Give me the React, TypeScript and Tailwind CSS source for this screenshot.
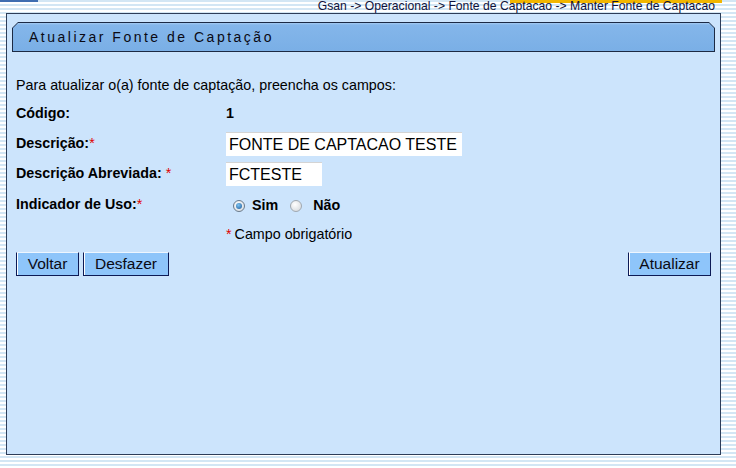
export default function App() {
  return (
    <div className="relative h-[468px] w-[736px] overflow-hidden bg-[repeating-linear-gradient(to_bottom,#d3e6f4_0px,#d3e6f4_2px,#ffffff_2px,#ffffff_4px)] font-['Liberation_Sans',Arial,sans-serif] text-black">
      <div className="absolute left-0 top-0 h-[2px] w-[38px] bg-[#3f6db0]" />
      <div className="absolute left-[510px] top-0 h-[3px] w-[212px] bg-[#f2b600]" />
      <div className="relative flex h-[13px] justify-end pr-[21px] text-[12.2px] leading-[12px] text-[#10123a] whitespace-nowrap">
        Gsan -&gt; Operacional -&gt; Fonte de Captacao -&gt; Manter Fonte de Captacao
      </div>
      <div className="ml-[6px] flex h-[442px] w-[715px] flex-col border border-[#2d3d58] bg-[#cce4fc]">
        <div className="mx-[5px] mt-[8px] h-[30px] bg-[#1c2a44] p-[1px] [clip-path:polygon(6px_0,calc(100%_-_6px)_0,100%_6px,100%_100%,0_100%,0_6px)]">
          <div className="flex h-full items-center bg-[linear-gradient(to_bottom,#a6ccf2_0px,#84b6ea_2px,#7aafe6_100%)] pl-[16px] text-[14px] tracking-[2.5px] text-[#0a0a14] [clip-path:polygon(5px_0,calc(100%_-_5px)_0,100%_5px,100%_100%,0_100%,0_5px)]">
            Atualizar Fonte de Captação
          </div>
        </div>

        <div className="ml-[9px] mt-[25px] text-[14.3px] leading-[17px]">
          Para atualizar o(a) fonte de captação, preencha os campos:
        </div>

        <div className="ml-[9px] mt-[8px] grid grid-cols-[210px_1fr] gap-y-[7px] text-[14.3px]">
          <div className="flex h-[24px] items-center font-bold">Código:</div>
          <div className="flex h-[24px] items-center font-bold">1</div>

          <div className="-mt-[1px] flex h-[24px] items-center font-bold">
            Descrição:<span className="font-normal text-[#e00000]">*</span>
          </div>
          <div className="-mt-[1px] flex h-[24px] items-center">
            <div className="flex h-[24px] w-[236px] items-center border-t border-t-[#d4d4d4] bg-white pl-[3px] text-[16px] leading-[18px]">
              FONTE DE CAPTACAO TESTE
            </div>
          </div>

          <div className="-mt-[1px] flex h-[24px] items-center font-bold">
            Descrição Abreviada:&nbsp;<span className="font-normal text-[#e00000]">*</span>
          </div>
          <div className="-mt-[1px] flex h-[24px] items-center">
            <div className="flex h-[24px] w-[96px] items-center border-t border-t-[#d4d4d4] bg-white pl-[3px] text-[16px] leading-[18px]">
              FCTESTE
            </div>
          </div>

          <div className="flex h-[24px] items-center font-bold">
            Indicador de Uso:<span className="font-normal text-[#e00000]">*</span>
          </div>
          <div className="flex h-[24px] items-center pl-[7px] pt-[2px] font-bold">
            <span className="flex h-[12px] w-[12px] items-center justify-center rounded-full border border-[#6a7a8a] bg-[radial-gradient(circle_at_40%_35%,#ffffff,#d0d6dc)]">
              <span className="h-[6px] w-[6px] rounded-full bg-[radial-gradient(circle_at_40%_35%,#7ec4f2,#1b5898)]" />
            </span>
            <span className="ml-[7px]">Sim</span>
            <span className="ml-[12px] h-[12px] w-[12px] rounded-full border border-[#a0a8b0] bg-[radial-gradient(circle_at_40%_35%,#ffffff,#d0d4d8)]" />
            <span className="ml-[11px]">Não</span>
          </div>

          <div className="h-[24px]" />
          <div className="-mt-[1px] flex h-[24px] items-center">
            <span className="text-[#e00000]">*</span>
            <span className="ml-[3px]">Campo obrigatório</span>
          </div>
        </div>

        <div className="ml-[9px] mr-[9px] mt-[4px] flex justify-between text-[15.5px]">
          <div className="flex gap-[4px]">
            <button className="h-[24px] w-[63px] border border-[#0d1a55] border-t-[#eef6ff] bg-[#8ec5fa] shadow-[inset_1px_0_0_#ffffff] leading-none text-[#0a0a14]">
              Voltar
            </button>
            <button className="h-[24px] w-[86px] border border-[#0d1a55] border-t-[#eef6ff] bg-[#8ec5fa] shadow-[inset_1px_0_0_#ffffff] leading-none text-[#0a0a14]">
              Desfazer
            </button>
          </div>
          <button className="h-[24px] w-[83px] border border-[#0d1a55] border-t-[#eef6ff] bg-[#8ec5fa] shadow-[inset_1px_0_0_#ffffff] leading-none text-[#0a0a14]">
            Atualizar
          </button>
        </div>
      </div>
    </div>
  );
}
